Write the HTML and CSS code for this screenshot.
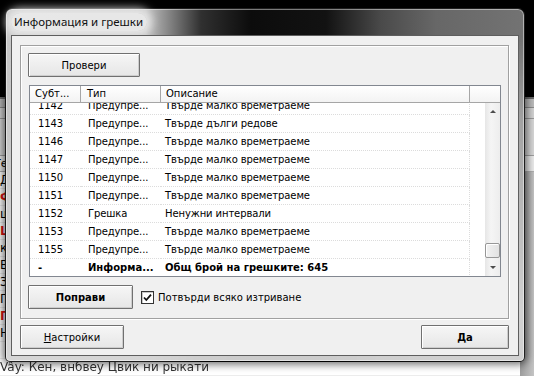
FILE: index.html
```html
<!DOCTYPE html>
<html lang="bg">
<head>
    <meta charset="UTF-8">
    <title>Информация и грешки</title>
    <link rel="stylesheet" href="styles.css">
</head>
<body>
    <div class="desk">
        <!-- приложението отзад -->
        <div class="app">
            <div class="app-bar"></div>
            <div class="app-head">Те</div>
            <div class="app-main">
                <div class="app-rows">
                    <div class="app-row">Д</div>
                    <div class="app-row red">Ф</div>
                    <div class="app-row">щ</div>
                    <div class="app-row red">Ш</div>
                    <div class="app-row">ка</div>
                    <div class="app-row">В</div>
                    <div class="app-row">За</div>
                    <div class="app-row">Гр</div>
                    <div class="app-row red">Г</div>
                    <div class="app-row">Н</div>
                    <div class="app-row"></div>
                    <div class="app-row blur">Vây: Кен, внбвеу Цвик ни рыкати</div>
                </div>
                <div class="app-side"></div>
            </div>
        </div>

        <!-- диалогът -->
        <div class="win">
            <div class="win-title"><span class="win-caption">Информация и грешки</span></div>
            <div class="win-client">
                <div class="group">
                    <button class="btn btn-check">Провери</button>

                    <div class="list">
                        <div class="list-head">
                            <div class="hcell c1">Субт...</div>
                            <div class="hcell c2">Тип</div>
                            <div class="hcell c3">Описание</div>
                        </div>
                        <div class="list-main">
                            <div class="list-body">
                                <div class="list-rows">
                                    <div class="row"><span class="c1">1142</span><span class="c2">Предупре...</span><span class="c3">Твърде малко времетраеме</span></div>
                                    <div class="row"><span class="c1">1143</span><span class="c2">Предупре...</span><span class="c3">Твърде дълги редове</span></div>
                                    <div class="row"><span class="c1">1146</span><span class="c2">Предупре...</span><span class="c3">Твърде малко времетраеме</span></div>
                                    <div class="row"><span class="c1">1147</span><span class="c2">Предупре...</span><span class="c3">Твърде малко времетраеме</span></div>
                                    <div class="row"><span class="c1">1150</span><span class="c2">Предупре...</span><span class="c3">Твърде малко времетраеме</span></div>
                                    <div class="row"><span class="c1">1151</span><span class="c2">Предупре...</span><span class="c3">Твърде малко времетраеме</span></div>
                                    <div class="row"><span class="c1">1152</span><span class="c2">Грешка</span><span class="c3">Ненужни интервали</span></div>
                                    <div class="row"><span class="c1">1153</span><span class="c2">Предупре...</span><span class="c3">Твърде малко времетраеме</span></div>
                                    <div class="row"><span class="c1">1155</span><span class="c2">Предупре...</span><span class="c3">Твърде малко времетраеме</span></div>
                                    <div class="row row-total"><span class="c1">-</span><span class="c2">Информа...</span><span class="c3">Общ брой на грешките: 645</span></div>
                                </div>
                            </div>
                            <div class="vscroll">
                                <div class="sb-btn"><span class="tri tri-up"></span></div>
                                <div class="sb-track"><div class="sb-thumb"></div></div>
                                <div class="sb-btn"><span class="tri tri-down"></span></div>
                            </div>
                        </div>
                    </div>

                    <div class="group-foot">
                        <button class="btn btn-fix">Поправи</button>
                        <label class="chk">
                            <span class="chk-box">
                                <svg viewBox="0 0 11 11" width="11" height="11">
                                    <path d="M2 5.5 L4.3 8 L9 2.6" />
                                </svg>
                            </span>
                            Потвърди всяко изтриване
                        </label>
                    </div>
                </div>

                <div class="win-foot">
                    <button class="btn btn-settings"><u>Н</u>астройки</button>
                    <button class="btn btn-ok"><u>Д</u>а</button>
                </div>
            </div>
        </div>
    </div>
</body>
</html>
```

FILE: styles.css
```css
* {
    box-sizing: border-box;
}

body {
    margin: 0;
    background: #000;
    font-family: "DejaVu Sans", sans-serif;
    font-size: 10px;
    color: #000;
}

.desk {
    position: relative;
    width: 534px;
    height: 376px;
    overflow: hidden;
    background: #000;
}

/* Приложение отзад */
.app {
    position: absolute;
    left: 0;
    right: 0;
    top: 97px;
    bottom: 0;
    display: flex;
    flex-direction: column;
    background: #fff;
}

.app-bar {
    height: 60px;
    background: linear-gradient(to bottom, #6a6a6a 0 2px, #bdbdbd 2px 10px, #8d8d8d 10px 11px, #d4d4d4 11px 21px, #9a9a9a 21px 22px, #d8d8d8 22px 58px, #a0a0a0 58px);
}

.app-head {
    height: 16px;
    line-height: 15px;
    font-size: 11px;
    margin-left: -6px;
    background: #ececec;
    border-bottom: 1px solid #b0b0b0;
}

.app-main {
    flex: 1;
    display: flex;
}

.app-rows {
    flex: 1;
}

.app-row {
    height: 17px;
    line-height: 17px;
    font-size: 12px;
    border-bottom: 1px solid #ececec;
    white-space: nowrap;
}

.app-row.red {
    color: #e01010;
    font-weight: bold;
}

.app-row.blur {
    color: #333;
    filter: blur(0.5px);
}

.app-side {
    width: 14px;
    background: linear-gradient(to right, #9c9c9c, #c4c4c4);
}

/* Прозорец */
.win {
    position: absolute;
    left: 5px;
    top: 8px;
    width: 520px;
    height: 354px;
    padding: 0 5px 5px 5px;
    display: flex;
    flex-direction: column;
    border: 1px solid rgba(0, 0, 0, 0.85);
    border-radius: 7px 7px 5px 5px;
    background:
        linear-gradient(to bottom, rgba(208, 208, 208, 0) 28px, rgba(200, 200, 200, 0.55) 110px, rgba(214, 214, 214, 0.95) 300px),
        linear-gradient(to right, #c6c6c6 0, #c2c2c2 140px, #303030 195px, #0c0c0c 245px, #121212 320px, #4a4a4a 375px, #676767 430px, #737373 518px);
    box-shadow: inset 0 0 0 1px rgba(255, 255, 255, 0.45), 0 0 9px 2px rgba(0, 0, 0, 0.6);
}

.win-title {
    height: 26px;
    display: flex;
    align-items: center;
}

.win-caption {
    font-family: "Noto Sans", sans-serif;
    font-size: 11.5px;
    color: #111;
    padding: 0 4px 0 3px;
    line-height: 18px;
    border-radius: 9px;
    background: rgba(240, 240, 240, 0.8);
    box-shadow: 0 0 8px 5px rgba(240, 240, 240, 0.8);
}

.win-client {
    flex: 1;
    display: flex;
    flex-direction: column;
    gap: 6px;
    padding: 9px 9px 6px 8px;
    background: #f0f0f0;
    border: 1px solid #5e5e5e;
}

/* Бутони */
.btn {
    height: 24px;
    padding: 0;
    font-family: "DejaVu Sans", sans-serif;
    font-size: 10px;
    color: #000;
    border: 1px solid #707070;
    border-radius: 1px;
    background: linear-gradient(#f6f6f6, #e6e6e6);
    box-shadow: inset 1px 1px 0 #fff, inset -1px -1px 0 #cdcdcd;
}

.btn-check {
    width: 112px;
}

.btn-fix {
    width: 105px;
    font-weight: bold;
}

.btn-settings {
    width: 104px;
}

.btn-ok {
    width: 88px;
    font-weight: bold;
}

/* Групата */
.group {
    height: 274px;
    display: flex;
    flex-direction: column;
    align-items: flex-start;
    gap: 8px;
    padding: 7px 7px 9px 7px;
    border: 1px solid #a0a0a0;
    box-shadow: inset 1px 1px 0 #fff, 1px 1px 0 #fff;
}

.list {
    align-self: stretch;
    margin-left: 1px;
    height: 192px;
    display: flex;
    flex-direction: column;
    border: 1px solid #828790;
    background: #fff;
}

.list-head {
    height: 17px;
    display: flex;
    background: linear-gradient(#ffffff, #f3f3f3);
    border-bottom: 1px solid #a6a6a6;
}

.hcell {
    line-height: 16px;
    padding-left: 5px;
    border-right: 1px solid #a6a6a6;
    white-space: nowrap;
}

.c1 {
    width: 51px;
}

.c2 {
    width: 80px;
}

.c3 {
    width: 309px;
}

.hcell.c2 {
    padding-left: 6px;
}

.list-main {
    flex: 1;
    display: flex;
    min-height: 0;
}

.list-body {
    flex: 1;
    overflow: hidden;
}

.list-rows {
    margin-top: -6px;
}

.row {
    height: 18px;
    display: flex;
    line-height: 17px;
    letter-spacing: -0.1px;
    white-space: nowrap;
}

.row span {
    border-bottom: 1px dotted #dcdcdc;
}

.row .c1 {
    padding-left: 8px;
}

.row .c2 {
    padding-left: 7px;
}

.row .c3 {
    padding-left: 4px;
    border-right: 1px dotted #dcdcdc;
}

.row-total {
    font-weight: bold;
    letter-spacing: 0;
}

/* Скролбар */
.vscroll {
    width: 15px;
    display: flex;
    flex-direction: column;
    background: linear-gradient(to right, #e6e6e6, #f5f5f5 40%, #ededed);
}

.sb-btn {
    height: 17px;
    display: flex;
    align-items: center;
    justify-content: center;
}

.tri {
    width: 0;
    height: 0;
    border-left: 3px solid transparent;
    border-right: 3px solid transparent;
}

.tri-up {
    border-bottom: 3px solid #4d4d4d;
}

.tri-down {
    border-top: 3px solid #4d4d4d;
}

.sb-track {
    flex: 1;
    display: flex;
    flex-direction: column;
    justify-content: flex-end;
    padding-bottom: 1px;
}

.sb-thumb {
    height: 15px;
    border: 1px solid #979797;
    border-radius: 2px;
    background: linear-gradient(to right, #f2f2f2, #e2e2e2);
    box-shadow: inset 1px 1px 0 #fff;
}

.group-foot {
    display: flex;
    align-items: center;
    gap: 8px;
}

.chk {
    display: flex;
    align-items: center;
    gap: 4px;
    white-space: nowrap;
}

.chk-box {
    width: 13px;
    height: 13px;
    display: flex;
    align-items: center;
    justify-content: center;
    background: #fff;
    border: 1px solid #333;
    box-shadow: inset 1px 1px 0 #c8c8c8;
}

.chk-box path {
    fill: none;
    stroke: #111;
    stroke-width: 1.8;
}

.win-foot {
    display: flex;
    justify-content: space-between;
}
```
